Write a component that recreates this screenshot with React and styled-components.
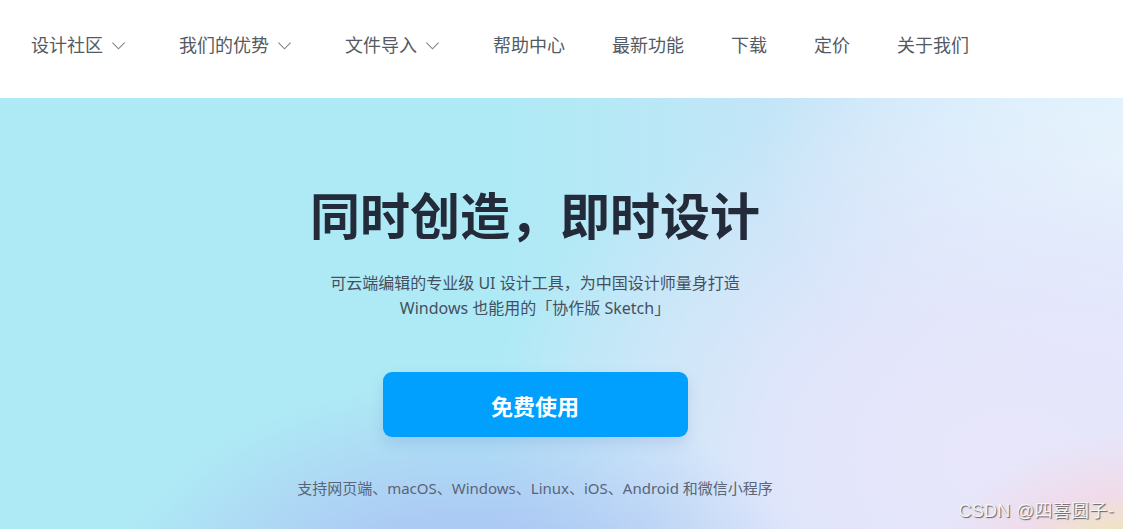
import React from "react";
import styled, { createGlobalStyle } from "styled-components";

const GlobalStyle = createGlobalStyle`
  html, body {
    margin: 0;
    padding: 0;
    background: #ffffff;
    font-family: "Noto Sans", "Noto Sans CJK SC", sans-serif;
  }
  * { box-sizing: border-box; }
`;

const Page = styled.div`
  width: 1123px;
  height: 529px;
  display: flex;
  flex-direction: column;
  overflow: hidden;
  position: relative;
`;

const Header = styled.header`
  height: 98px;
  flex: none;
  background: #ffffff;
  display: flex;
  align-items: center;
  padding: 0 0 8px 31px;
`;

const Nav = styled.nav`
  display: flex;
  align-items: center;
  gap: 47px;
`;

const NavItem = styled.a`
  display: flex;
  align-items: center;
  font-size: 18px;
  line-height: 24px;
  color: #545a63;
  text-decoration: none;
  cursor: pointer;
  white-space: nowrap;
`;

const Chevron = styled.svg`
  width: 15px;
  height: 15px;
  margin: 0 6px 0 8px;
  flex: none;
`;

const Hero = styled.section`
  flex: 1;
  display: flex;
  flex-direction: column;
  align-items: center;
  padding: 84px 53px 0 0;
  background:
    radial-gradient(ellipse 270px 250px at 1135px 545px, #eee2bd 0%, #efe3c3 46%, rgba(241, 218, 232, 0.9) 60%, rgba(238, 222, 245, 0) 85%),
    radial-gradient(ellipse 360px 240px at 460px 520px, rgba(164, 184, 243, 0.95) 0%, rgba(172, 194, 244, 0.75) 45%, rgba(174, 210, 245, 0) 100%),
    radial-gradient(ellipse 520px 380px at 1000px 360px, #e8e6fb 0%, rgba(230, 230, 251, 0.85) 40%, rgba(220, 228, 250, 0) 100%),
    radial-gradient(ellipse 360px 260px at 1123px 60px, #e6f6fd 0%, rgba(222, 242, 252, 0.8) 45%, rgba(200, 236, 250, 0) 100%),
    linear-gradient(90deg, #aeeaf5 0%, #aeeaf5 45%, #c8e4f8 75%, #dfe6fb 100%);
`;

const Title = styled.h1`
  margin: 0;
  font-family: "Noto Sans CJK SC", sans-serif;
  font-size: 50px;
  line-height: 62px;
  font-weight: 700;
  color: #232b3b;
`;

const Subtitle = styled.p`
  margin: 27px 0 0;
  font-size: 16px;
  line-height: 25px;
  color: #45505f;
  text-align: center;
`;

const PrimaryButton = styled.button`
  margin-top: 51px;
  width: 305px;
  height: 65px;
  border: none;
  border-radius: 9px;
  background: #019ffe;
  color: #ffffff;
  font-family: "Noto Sans CJK SC", sans-serif;
  font-size: 22px;
  font-weight: 700;
  cursor: pointer;
  box-shadow: 0 6px 14px rgba(80, 110, 190, 0.18);
`;

const Platforms = styled.p`
  margin: 41px 0 0;
  font-size: 15px;
  line-height: 20px;
  color: #5a6477;
`;

const Watermark = styled.span`
  position: absolute;
  right: 9px;
  bottom: 7px;
  font-family: "Liberation Sans", "Noto Sans CJK SC", sans-serif;
  font-size: 18px;
  color: #f4f4f4;
  text-shadow: 1px 1px 1px rgba(70, 70, 70, 0.85);
  letter-spacing: 0.3px;
`;

const navItems = [
  { label: "设计社区", dropdown: true },
  { label: "我们的优势", dropdown: true },
  { label: "文件导入", dropdown: true },
  { label: "帮助中心" },
  { label: "最新功能" },
  { label: "下载" },
  { label: "定价" },
  { label: "关于我们" },
];

export default function App() {
  return (
    <>
      <GlobalStyle />
      <Page>
        <Header>
          <Nav>
            {navItems.map((item) => (
              <NavItem key={item.label}>
                {item.label}
                {item.dropdown && (
                  <Chevron viewBox="0 0 16 16" fill="none">
                    <path d="M1.5 5l6.5 6.5L14.5 5" stroke="#7a7f87" strokeWidth="1.1" />
                  </Chevron>
                )}
              </NavItem>
            ))}
          </Nav>
        </Header>
        <Hero>
          <Title>同时创造，即时设计</Title>
          <Subtitle>
            可云端编辑的专业级 UI 设计工具，为中国设计师量身打造
            <br />
            Windows 也能用的「协作版 Sketch」
          </Subtitle>
          <PrimaryButton>免费使用</PrimaryButton>
          <Platforms>支持网页端、macOS、Windows、Linux、iOS、Android 和微信小程序</Platforms>
        </Hero>
        <Watermark>CSDN @四喜圆子-</Watermark>
      </Page>
    </>
  );
}
